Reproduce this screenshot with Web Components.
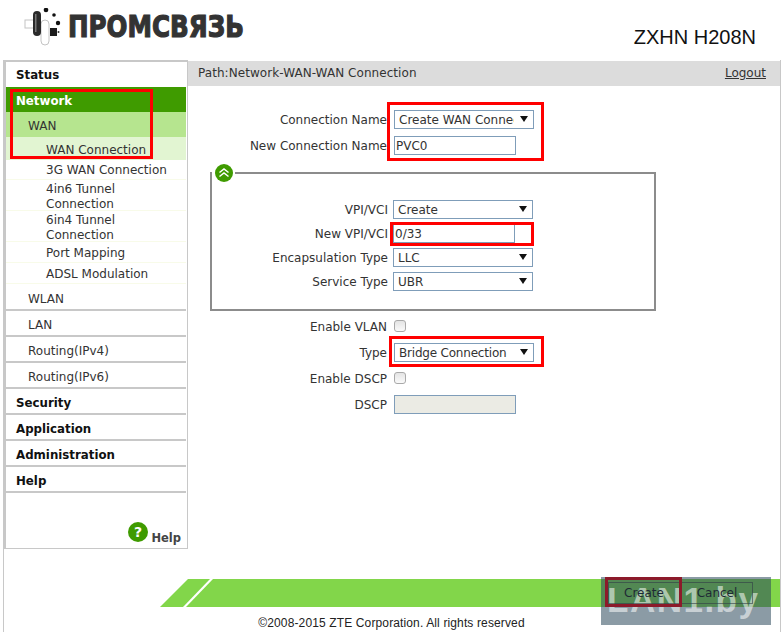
<!DOCTYPE html>
<html><head><meta charset="utf-8"><style>
html,body{margin:0;padding:0;background:#fff}
body{width:781px;height:632px;overflow:hidden;font-family:"DejaVu Sans",sans-serif;font-size:12px;color:#222}
</style></head><body>
<router-page></router-page>
<script>
function el(name, css, html, setup){
  customElements.define(name, class extends HTMLElement{
    constructor(){super();const s=this.attachShadow({mode:'open'});s.innerHTML='<style>'+css+'</style>'+html;}
    connectedCallback(){ if(setup) setup(this,this.shadowRoot); }
  });
}
el('brand-logo',`:host{display:flex;align-items:flex-start;height:60px;box-sizing:border-box;padding:8px 0 0 24px}
 svg{flex:none;display:block}
 span{font:700 30px/1 "DejaVu Sans",sans-serif;color:#333;-webkit-text-stroke:1.2px #333;margin:3.500px 0 0 0;white-space:nowrap;display:inline-block;transform-origin:0 0;transform:scaleX(.82)}`,
 `<svg width="44" height="38" viewBox="24 8 44 38"><rect x="25" y="20" width="10" height="8" fill="#fff" stroke="#c4c4c4"/><rect x="41" y="20" width="8" height="25" rx="4" fill="#fff" stroke="#c4c4c4"/><rect x="33" y="11" width="8" height="25" rx="4" fill="#2a2a2a"/><rect x="35" y="14" width="1.500" height="18" fill="#777"/><rect x="50" y="28" width="7" height="8" fill="#1c1c1c"/><circle cx="46" cy="10" r="2.300" fill="#111"/><circle cx="54" cy="15" r="1.800" fill="#111"/><circle cx="58" cy="23" r="2.200" fill="#111"/><circle cx="58.500" cy="32" r="1" fill="#333"/></svg><span>ПРОМСВЯЗЬ</span>`);
el('page-header',`:host{display:flex;justify-content:space-between;height:60px}
 b{font:400 20px/23px "Liberation Sans",sans-serif;color:#111;margin:26px 25px 0 0}`,
 `<slot></slot><b>ZXHN H208N</b>`);
el('nav-item',`:host{display:block;box-sizing:border-box;border-bottom:2px solid #c8c8c8;height:26px;padding:2px 0 0 10px;font:700 11.800px/24px "DejaVu Sans",sans-serif;color:#111}
 :host([on]){background:#3f9b00;color:#fff;border-bottom:0;height:25px}
 :host([sub]){font-weight:400;padding-left:22px;color:#333;font-size:12px}
 :host([sub][on]){background:#b6e58f;color:#333}
 :host([none]){border-bottom:0;height:25px;padding-top:1px}
 :host([tall]){height:27px;padding-top:3px}`,`<slot></slot>`);
el('nav-leaf',`:host{display:block;box-sizing:border-box;padding:3px 15px 1px 40px;color:#333;font:12px/15px "DejaVu Sans",sans-serif;border-bottom:1px solid #f8fbe9}
 :host([on]){background:#e2f5d2;height:23px;padding-top:6px;border-bottom:0}
 :host([wrap]){height:31px;padding-top:2px;padding-bottom:0}
 :host([tall]){height:21px;padding-top:4px;padding-bottom:0}`,`<slot></slot>`);
el('side-nav',`:host{flex:none;display:flex;flex-direction:column;box-sizing:border-box;width:184px;height:489px;border:solid #c8c8c8;border-width:2px 1px 1px 2px;padding-right:1px}
 .help{margin-top:auto;align-self:flex-end;display:flex;align-items:flex-end;padding:0 5px 2px 0;font:700 11.500px/15px "DejaVu Sans",sans-serif;color:#444;gap:3px}
 .help svg{display:block;margin-bottom:4px}`,
 `<slot></slot><div class="help"><svg width="20" height="20" viewBox="0 0 20 20"><circle cx="10" cy="10" r="10" fill="#3f9b00"/><text x="10" y="15" text-anchor="middle" font-family="DejaVu Sans" font-size="14" fill="#fff">?</text></svg>Help</div>`);
el('path-bar',`:host{display:flex;justify-content:space-between;align-items:center;box-sizing:border-box;height:25px;background:#dcdcdc;padding:0 14px 2px 10px;color:#333;font-size:12px;letter-spacing:.06px}
 a{color:#333;text-decoration:underline;letter-spacing:0}`,`<span><slot></slot></span><a>Logout</a>`);
el('form-row',`:host{display:flex;align-items:center;height:26px}
 :host([tight]){height:24px}
 label{flex:none;text-align:right;width:var(--lw,206px);padding:2px var(--pr,7px) 0 0;box-sizing:border-box;color:#333;white-space:nowrap;font-size:12px}`,
 `<label></label><slot></slot>`,(h,s)=>{s.querySelector('label').textContent=h.getAttribute('label')});
el('ui-select',`:host{display:flex;box-sizing:border-box;width:140px;height:19px;border:1px solid #7f9db9;align-items:center;padding-left:4px;background:#fff;color:#333;font-size:12px;white-space:nowrap;overflow:hidden}
 span{flex:1;overflow:hidden;padding-top:2px}
 i{flex:none;width:0;height:0;border:4px solid transparent;border-top:6px solid #111;border-bottom:0;margin:0 5px 0 6px}`,
 `<span><slot></slot></span><i></i>`);
el('ui-input',`:host{display:flex;box-sizing:border-box;width:122px;height:19px;border:1px solid #7f9db9;align-items:center;padding:2px 0 0 1px;background:#fff;color:#333;font-size:12px}
 :host([off]){background:#ebebe4}`,`<slot></slot>`);
el('ui-check',`:host{display:block;box-sizing:border-box;width:12px;height:12px;border:1px solid #a9a9a9;border-radius:3px;background:linear-gradient(#e4e4e4,#fafafa)}`,``);
el('conn-group',`:host{display:block;box-sizing:border-box;width:446px;height:139px;margin:14px 0 0 22px;border:2px solid #8c8c8c;position:relative;padding-top:23px;--lw:181px;--pr:5px}
 .tg{position:absolute;left:0;top:-10px;width:23px;height:18px;background:#fff;display:flex;justify-content:center}`,
 `<div class="tg"><svg width="18" height="18" viewBox="0 0 18 18"><circle cx="9" cy="9" r="9" fill="#3f9b00"/><path d="M4.500 8.500 9 5l4.500 3.500M4.500 12.500 9 9l4.500 3.500" fill="none" stroke="#fff" stroke-width="1.500"/></svg></div><slot></slot>`);
el('mark-box',`:host{position:absolute;box-sizing:border-box;border:3px solid #f00;pointer-events:none}`,``);
el('action-bar',`:host{display:block;position:relative;height:28px;margin-left:160px;margin-right:1px;background:#82d64a;clip-path:polygon(28px 0,100% 0,100% 100%,0 100%)}
 .ln{position:absolute;inset:0;background:#fff;clip-path:polygon(50px 0,53px 0,26px 100%,23px 100%)}`,
 `<div class="ln"></div>`);
el('page-footer',`:host{display:block;text-align:center;font:12px/15px "Liberation Sans",sans-serif;color:#222;padding-left:2px;letter-spacing:.13px}`,`<slot></slot>`);
el('lan-stamp',`:host{position:absolute;left:601px;top:577px;width:170px;height:48px;background:rgba(44,73,91,.55);display:block}
 .btn{position:absolute;top:5px;height:22px;border:1px solid rgba(50,60,70,.6);box-sizing:border-box;color:#1f2a35;font:12px/20px "DejaVu Sans",sans-serif;text-align:center}
 .wm{position:absolute;left:6px;top:-2px;font:700 35px/50px "Liberation Sans",sans-serif;color:rgba(255,255,255,.55);letter-spacing:1.500px;white-space:nowrap}
 .red{position:absolute;left:4px;top:0;width:77px;height:30px;box-sizing:border-box;border:3px solid #8c1a2a}`,
 `<div class="wm">LAN1.by</div><div class="btn" style="left:7px;width:72px">Create</div><div class="btn" style="left:80px;width:72px">Cancel</div><div class="red"></div>`);
el('router-page',`:host{display:block;position:relative;width:781px;height:632px}
 .main{display:flex;margin-left:3px;border-left:1px solid #c8c8c8;border-right:1px solid #c8c8c8;height:572px;box-sizing:border-box}
 .col{flex:1;display:flex;flex-direction:column;min-width:0;padding-top:1px}
 .form{padding-top:20px}
 .after{padding-top:2px}
 .fwrap{position:absolute;left:0;right:0;top:616px}
 .bar{position:absolute;left:0;right:0;top:579px}`,
 `<page-header><brand-logo></brand-logo></page-header>
 <div class="main">
  <side-nav>
   <nav-item none>Status</nav-item>
   <nav-item on>Network</nav-item>
   <nav-item on sub>WAN</nav-item>
   <nav-leaf on>WAN Connection</nav-leaf>
   <nav-leaf>3G WAN Connection</nav-leaf>
   <nav-leaf wrap>4in6 Tunnel Connection</nav-leaf>
   <nav-leaf wrap>6in4 Tunnel Connection</nav-leaf>
   <nav-leaf tall>Port Mapping</nav-leaf>
   <nav-leaf tall>ADSL Modulation</nav-leaf>
   <nav-item sub tall>WLAN</nav-item>
   <nav-item sub>LAN</nav-item>
   <nav-item sub>Routing(IPv4)</nav-item>
   <nav-item sub>Routing(IPv6)</nav-item>
   <nav-item>Security</nav-item>
   <nav-item>Application</nav-item>
   <nav-item>Administration</nav-item>
   <nav-item>Help</nav-item>
  </side-nav>
  <div class="col">
   <path-bar>Path:Network-WAN-WAN Connection</path-bar>
   <div class="form">
    <form-row label="Connection Name"><ui-select>Create WAN Connection</ui-select></form-row>
    <form-row label="New Connection Name"><ui-input>PVC0</ui-input></form-row>
    <conn-group>
     <form-row tight label="VPI/VCI"><ui-select>Create</ui-select></form-row>
     <form-row tight label="New VPI/VCI"><ui-input>0/33</ui-input></form-row>
     <form-row tight label="Encapsulation Type"><ui-select>LLC</ui-select></form-row>
     <form-row tight label="Service Type"><ui-select>UBR</ui-select></form-row>
    </conn-group>
    <div class="after">
     <form-row label="Enable VLAN"><ui-check></ui-check></form-row>
     <form-row label="Type"><ui-select style="letter-spacing:-.2px">Bridge Connection</ui-select></form-row>
     <form-row label="Enable DSCP"><ui-check></ui-check></form-row>
     <form-row label="DSCP"><ui-input off></ui-input></form-row>
    </div>
   </div>
  </div>
 </div>
 <div class="bar"><action-bar></action-bar></div>
 <div class="fwrap"><page-footer>©2008-2015 ZTE Corporation. All rights reserved</page-footer></div>
 <lan-stamp></lan-stamp>
 <mark-box style="left:10px;top:89px;width:143px;height:70px"></mark-box>
 <mark-box style="left:387px;top:102px;width:157px;height:59px"></mark-box>
 <mark-box style="left:390px;top:222px;width:144px;height:24px"></mark-box>
 <mark-box style="left:389px;top:336px;width:155px;height:31px"></mark-box>`);
</script>
</body></html>
